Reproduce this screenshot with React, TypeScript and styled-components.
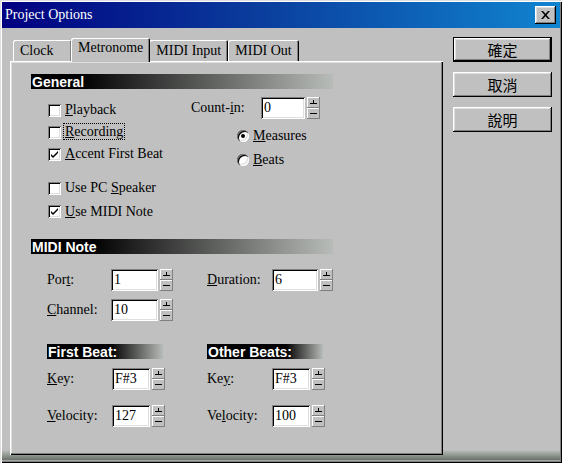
import React from 'react'
import styled, { createGlobalStyle, css } from 'styled-components'

const GlobalStyle = createGlobalStyle`
  html, body {
    margin: 0;
    padding: 0;
    background: #c0c0c0;
  }
  body {
    font-family: 'Liberation Serif', 'Times New Roman', serif;
    font-size: 14px;
    color: #000;
  }
  * { box-sizing: border-box; }
`

const raised = css`
  box-shadow: inset -1px -1px #000, inset 1px 1px #fff, inset -2px -2px #808080, inset 2px 2px #dfdfdf;
`
const sunken = css`
  box-shadow: inset 1px 1px #808080, inset -1px -1px #fff, inset 2px 2px #000, inset -2px -2px #dfdfdf;
`

const Window = styled.div`
  width: 562px;
  height: 463px;
  padding: 2px;
  display: flex;
  flex-direction: column;
  background: linear-gradient(to bottom, #c0c0c0 0, #c0c0c0 450px, #aab0aa 452px, #6a706a 460px, #d8d8d8 461px, #c0c0c0 463px);
  box-shadow: inset 1px 1px #dfdfdf, inset 2px 2px #fff, inset -1px -1px #000, inset -2px -2px #808080;
`

const TitleBar = styled.div`
  height: 26px;
  display: flex;
  align-items: center;
  justify-content: space-between;
  padding: 0 4px 0 3px;
  background: linear-gradient(90deg, #000080 0%, #0a3c9c 45%, #1084d0 100%);
  color: #fff;
  font-size: 14px;
`

const CloseButton = styled.div`
  width: 21px;
  height: 18px;
  display: flex;
  align-items: center;
  justify-content: center;
  background: #c0c0c0;
  ${raised}
`

const Body = styled.div`
  display: flex;
  gap: 10px;
  padding: 10px 0 0 8px;
`

const TabArea = styled.div`
  width: 433px;
  display: flex;
  flex-direction: column;
`

const TabStrip = styled.div`
  height: 23px;
  display: flex;
  align-items: flex-end;
  padding-left: 3px;
`

const Tab = styled.div<{ $active?: boolean; $min?: number }>`
  position: relative;
  height: ${(p) => (p.$active ? 24 : 21)}px;
  min-width: ${(p) => p.$min || 0}px;
  padding: 0 7px;
  margin: 0 ${(p) => (p.$active ? -1 : 0)}px ${(p) => (p.$active ? -1 : 0)}px;
  z-index: ${(p) => (p.$active ? 2 : 1)};
  display: flex;
  align-items: ${(p) => (p.$active ? 'flex-start' : 'center')};
  padding-top: ${(p) => (p.$active ? 2 : 0)}px;
  background: #c0c0c0;
  border-radius: 2px 2px 0 0;
  box-shadow: inset 1px 1px #fff, inset -1px 0 #000, inset -2px 0 #808080;
  white-space: nowrap;
`

const Panel = styled.div`
  height: 394px;
  padding: 13px 0 0 21px;
  background: #c0c0c0;
  box-shadow: inset 1px 1px #fff, inset -1px -1px #000, inset -2px -2px #808080, inset 2px 2px #dfdfdf;
`

const Header = styled.div<{ $w: number; $fade: number }>`
  width: ${(p) => p.$w}px;
  height: 15px;
  padding-left: 1px;
  display: flex;
  align-items: center;
  font-family: 'Liberation Sans', Arial, sans-serif;
  font-weight: bold;
  font-size: 14px;
  color: #fff;
  background: linear-gradient(90deg, #000 0%, #000 ${(p) => p.$fade}%, #b8bcb8 100%);
`

const GeneralBody = styled.div`
  display: flex;
  margin: 8px 0 0 17px;
`

const CheckColumn = styled.div`
  width: 143px;
  padding-top: 2px;
  display: flex;
  flex-direction: column;
`

const CheckRow = styled.div<{ $h: number }>`
  height: ${(p) => p.$h}px;
  display: flex;
  align-items: center;
  gap: 4px;
`

const Spacer = styled.div<{ $h: number }>`
  height: ${(p) => p.$h}px;
`

const Box = styled.div`
  width: 13px;
  height: 13px;
  background: #fff;
  display: flex;
  align-items: center;
  justify-content: center;
  ${sunken}
`

const Focus = styled.span`
  outline: 1px dotted #000;
  padding: 0 1px;
  margin-left: -1px;
`

const RightColumn = styled.div`
  display: flex;
  flex-direction: column;
`

const FieldRow = styled.div<{ $top?: number; $left?: number }>`
  display: flex;
  align-items: center;
  margin-top: ${(p) => p.$top || 0}px;
  margin-left: ${(p) => p.$left || 0}px;
`

const Field = styled.div<{ $gap?: number }>`
  display: flex;
  align-items: center;
  margin-right: ${(p) => p.$gap || 0}px;
`

const Label = styled.span<{ $w: number }>`
  width: ${(p) => p.$w}px;
  white-space: nowrap;
`

const Input = styled.div<{ $w: number }>`
  width: ${(p) => p.$w}px;
  height: 22px;
  padding: 2px 0 0 3px;
  background: #fff;
  line-height: 18px;
  ${sunken}
`

const SpinWrap = styled.div`
  width: 13px;
  height: 22px;
  margin-left: 2px;
  display: flex;
  flex-direction: column;
`

const SpinBtn = styled.div`
  flex: 1;
  display: flex;
  align-items: center;
  justify-content: center;
  background: #c0c0c0;
  box-shadow: inset -1px -1px #808080, inset 1px 1px #fff;
`

const RadioGroup = styled.div`
  margin: 5px 0 0 46px;
  display: flex;
  flex-direction: column;
`

const RadioRow = styled.div`
  height: 24px;
  display: flex;
  align-items: center;
  gap: 4px;
`

const Radio = styled.div<{ $on?: boolean }>`
  width: 12px;
  height: 12px;
  border-radius: 50%;
  background: #fff;
  display: flex;
  align-items: center;
  justify-content: center;
  box-shadow: inset 1px 1px #808080, inset 2px 2px #000, inset -1px -1px #fff, inset -2px -2px #dfdfdf;
  &::after {
    content: '';
    display: ${(p) => (p.$on ? 'block' : 'none')};
    width: 4px;
    height: 4px;
    border-radius: 50%;
    background: #000;
  }
`

const BeatSection = styled.div`
  display: flex;
  margin: 23px 0 0 16px;
`

const BeatColumn = styled.div`
  width: 160px;
  display: flex;
  flex-direction: column;
`

const ButtonColumn = styled.div`
  display: flex;
  flex-direction: column;
  gap: 10px;
  margin-top: -1px;
`

const Button = styled.div<{ $default?: boolean }>`
  width: 99px;
  height: 25px;
  display: flex;
  align-items: center;
  justify-content: center;
  font-family: 'Noto Sans CJK TC', 'Noto Sans CJK SC', sans-serif;
  font-size: 15px;
  background: #c0c0c0;
  border: ${(p) => (p.$default ? '1px solid #000' : 'none')};
  ${raised}
`

const Check = () => (
  <svg width="7" height="7" viewBox="0 0 7 7">
    <path d="M0 3 L0 5 L2 7 L7 2 L7 0 L2 5 Z" fill="#000" />
  </svg>
)

const CheckBox = ({ on, children, h = 22 }: { on?: boolean; children: React.ReactNode; h?: number }) => (
  <CheckRow $h={h}>
    <Box>{on && <Check />}</Box>
    <span>{children}</span>
  </CheckRow>
)

const Spinner = () => (
  <SpinWrap>
    <SpinBtn>
      <svg width="7" height="5" viewBox="0 0 7 5">
        <rect x="0" y="3" width="7" height="1" fill="#000" />
        <rect x="3" y="0" width="1" height="4" fill="#000" />
      </svg>
    </SpinBtn>
    <SpinBtn>
      <svg width="7" height="3" viewBox="0 0 7 3">
        <rect x="0" y="1" width="7" height="1" fill="#000" />
      </svg>
    </SpinBtn>
  </SpinWrap>
)

const NumField = (props: { label: React.ReactNode; lw: number; iw: number; value: string; gap?: number }) => (
  <Field $gap={props.gap}>
    <Label $w={props.lw}>{props.label}</Label>
    <Input $w={props.iw}>{props.value}</Input>
    <Spinner />
  </Field>
)

const BeatBlock = (props: { title: string; fade: number; keyLabel: React.ReactNode; velLabel: React.ReactNode; velocity: string }) => (
  <BeatColumn>
    <Header $w={116} $fade={props.fade}>{props.title}</Header>
    <FieldRow $top={9}>
      <NumField label={props.keyLabel} lw={65} iw={38} value="F#3" />
    </FieldRow>
    <FieldRow $top={15}>
      <NumField label={props.velLabel} lw={65} iw={38} value={props.velocity} />
    </FieldRow>
  </BeatColumn>
)

export default function App() {
  return (
    <>
      <GlobalStyle />
      <Window>
        <TitleBar>
          <span>Project Options</span>
          <CloseButton>
            <svg width="9" height="8" viewBox="0 0 9 8">
              <path d="M0 0 H2 L4.5 2.8 L7 0 H9 L5.5 4 L9 8 H7 L4.5 5.2 L2 8 H0 L3.5 4 Z" fill="#000" />
            </svg>
          </CloseButton>
        </TitleBar>
        <Body>
          <TabArea>
            <TabStrip>
              <Tab $min={59}>Clock</Tab>
              <Tab $active>Metronome</Tab>
              <Tab>MIDI Input</Tab>
              <Tab>MIDI Out</Tab>
            </TabStrip>
            <Panel>
              <Header $w={302} $fade={16}>General</Header>
              <GeneralBody>
                <CheckColumn>
                  <CheckBox><u>P</u>layback</CheckBox>
                  <CheckBox><Focus><u>R</u>ecording</Focus></CheckBox>
                  <CheckBox on><u>A</u>ccent First Beat</CheckBox>
                  <Spacer $h={11.5} />
                  <CheckBox h={23.5}>Use PC <u>S</u>peaker</CheckBox>
                  <CheckBox h={23.5} on><u>U</u>se MIDI Note</CheckBox>
                </CheckColumn>
                <RightColumn>
                  <FieldRow>
                    <NumField label={<>Count-<u>i</u>n:</>} lw={70} iw={44} value="0" />
                  </FieldRow>
                  <RadioGroup>
                    <RadioRow><Radio $on /><span><u>M</u>easures</span></RadioRow>
                    <RadioRow><Radio /><span><u>B</u>eats</span></RadioRow>
                  </RadioGroup>
                </RightColumn>
              </GeneralBody>
              <Spacer $h={15.5} />
              <Header $w={302} $fade={20}>MIDI Note</Header>
              <FieldRow $top={15} $left={16}>
                <NumField label={<>Por<u>t</u>:</>} lw={64} iw={47} value="1" gap={34} />
                <NumField label={<><u>D</u>uration:</>} lw={65} iw={46} value="6" />
              </FieldRow>
              <FieldRow $top={8} $left={16}>
                <NumField label={<><u>C</u>hannel:</>} lw={64} iw={47} value="10" />
              </FieldRow>
              <BeatSection>
                <BeatBlock
                  title="First Beat:"
                  fade={55}
                  keyLabel={<><u>K</u>ey:</>}
                  velLabel={<><u>V</u>elocity:</>}
                  velocity="127"
                />
                <BeatBlock
                  title="Other Beats:"
                  fade={68}
                  keyLabel={<>Ke<u>y</u>:</>}
                  velLabel={<>Ve<u>l</u>ocity:</>}
                  velocity="100"
                />
              </BeatSection>
            </Panel>
          </TabArea>
          <ButtonColumn>
            <Button $default>確定</Button>
            <Button>取消</Button>
            <Button>說明</Button>
          </ButtonColumn>
        </Body>
      </Window>
    </>
  )
}
